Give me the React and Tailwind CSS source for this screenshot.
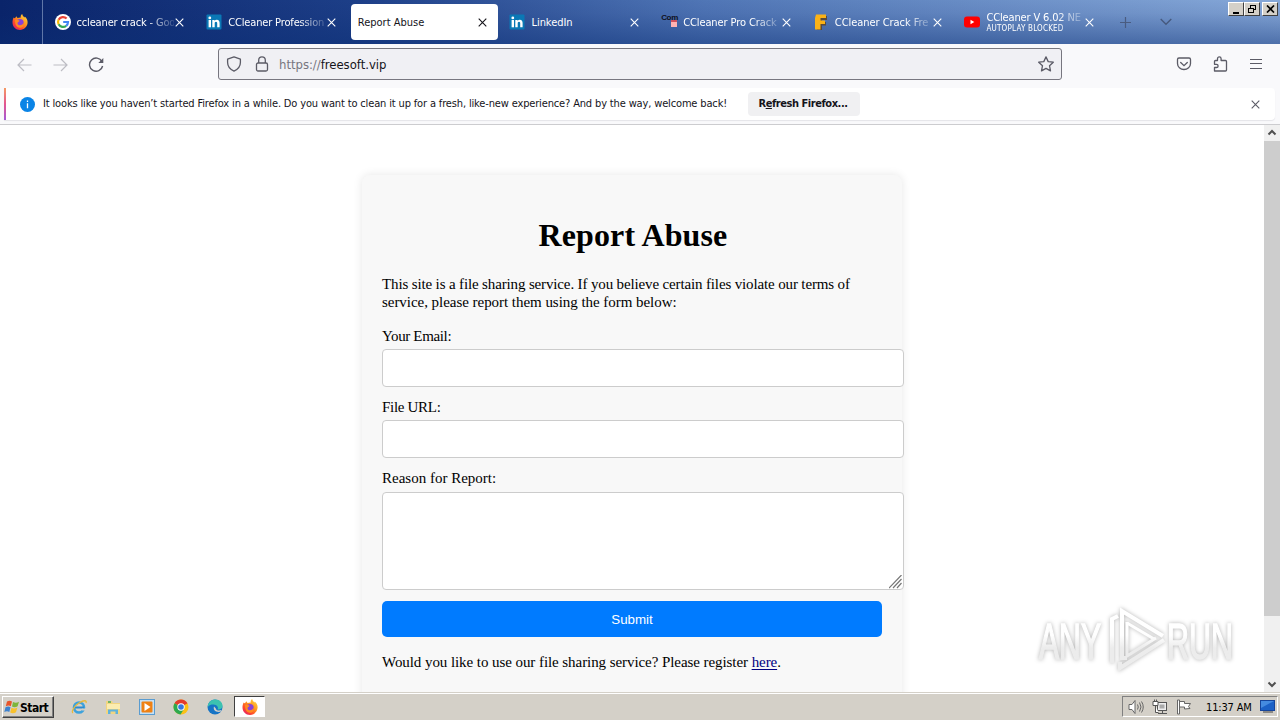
const ui = "font-['DejaVu_Sans_Condensed','DejaVu_Sans',sans-serif]";

function Firefox({ size = 16 }) {
  return (
    <svg width={size} height={size} viewBox="0 0 16 16" className="shrink-0">
      <defs>
        <linearGradient id="fx" x1="1" y1="0" x2="0.2" y2="1">
          <stop offset="0" stopColor="#ffe14a" />
          <stop offset=".45" stopColor="#ff9a1f" />
          <stop offset=".75" stopColor="#ff4a2b" />
          <stop offset="1" stopColor="#e3206b" />
        </linearGradient>
      </defs>
      <path d="M1.7 3.5 C2 4 2.4 4.2 3 4.3 C3.5 3.2 4 2.7 4.7 2.2 C4.7 3 5 3.6 5.6 4 C7 3.6 8 3.3 8.9 3.6 C8.3 2.3 8.8 .9 10.2 0 C10.4 1.6 11.4 2.4 12.6 3.5 C12.8 3.1 12.8 2.8 12.7 2.4 C14.7 4 15.8 6.2 15.6 8.8 C15.3 12.8 12 15.9 8 15.9 C3.8 15.9 .5 12.6 .5 8.4 C.5 6.4 .9 4.7 1.7 3.5Z" fill="url(#fx)" />
      <circle cx="8" cy="8.8" r="3.7" fill="#8a41d8" />
      <path d="M3 6.2 C4.2 5.3 6 5.8 7.6 6.7 C7.4 7.5 6.3 7.7 5.7 8.4 C5.2 9.6 5.9 11 7.6 11.2 C9.5 11.4 11 10.2 11.4 8.4 C12.6 11 11 13.6 8 13.7 C5 13.7 3 11 3 6.2Z" fill="#ff8a20" />
    </svg>
  );
}

function Google() {
  return (
    <svg width="16" height="16" viewBox="0 0 16 16" className="shrink-0">
      <circle cx="8" cy="8" r="8" fill="#fff" />
      <g fill="none" strokeWidth="2.2">
        <path d="M11.6 4.6 A5 5 0 0 0 3.6 5.7" stroke="#ea4335" />
        <path d="M3.6 5.7 A5 5 0 0 0 3.6 10.3" stroke="#fbbc05" />
        <path d="M3.6 10.3 A5 5 0 0 0 11.2 11.8" stroke="#34a853" />
        <path d="M11.2 11.8 A5 5 0 0 0 13 8 H8.2" stroke="#4285f4" />
      </g>
    </svg>
  );
}

function LinkedIn() {
  return (
    <svg width="16" height="16" viewBox="0 0 16 16" className="shrink-0">
      <rect x="0.5" y="0.5" width="15" height="15" rx="1" fill="#0a78b5" />
      <g fill="#fff">
        <circle cx="3.8" cy="3.9" r="1.4" />
        <rect x="2.6" y="6" width="2.4" height="7.300" />
        <path d="M6.300 6h2.300v1c.5-.8 1.200-1.200 2.200-1.200 2 0 2.800 1.300 2.800 3.200v4.300h-2.400V9.500c0-1-.2-1.800-1.200-1.800s-1.300.8-1.300 1.800v3.800H6.300z" />
      </g>
    </svg>
  );
}

function ComIcon() {
  return (
    <div className="relative h-4 w-4 shrink-0">
      <span className="absolute left-0 top-0 font-['Liberation_Sans',sans-serif] text-[8px] font-bold leading-[8px] tracking-[-0.3px] text-[#101020]">Com</span>
      <span className="absolute left-[10px] top-[8px] h-[5px] w-[6px] bg-[#ffb3b3]" />
      <span className="absolute left-[10px] top-[6px] h-[2px] w-[6px] bg-[#d0505c]" />
    </div>
  );
}

function FIcon() {
  return (
    <svg width="16" height="16" viewBox="0 0 16 16" className="shrink-0">
      <path d="M4 2h10v4H9v2h4v3.500H9V16H4z" fill="#5a4a3a" />
      <path d="M3 .5h10v3.500H7.500v2.500H12V10H7.500v5.500H2V4z" fill="#fbb216" />
    </svg>
  );
}

function YouTube() {
  return (
    <svg width="16" height="16" viewBox="0 0 16 16" className="shrink-0">
      <rect x="0" y="2.500" width="16" height="11" rx="3" fill="#f00" />
      <path d="M6.500 5.800v4.400L10.300 8z" fill="#fff" />
    </svg>
  );
}

function Cross({ color = "#fff", s = 9 }) {
  return (
    <svg width={s} height={s} viewBox="0 0 9 9" className="shrink-0">
      <path d="M.7.700l7.600 7.600M8.300.700L.7 8.300" stroke={color} strokeWidth="1.100" fill="none" />
    </svg>
  );
}

const tabs = [
  { icon: <Google />, text: "ccleaner crack - Goo", track: "tracking-[-0.15px]", fade: true },
  { icon: <LinkedIn />, text: "CCleaner Profession", track: "tracking-[-0.15px]", fade: true },
  { text: "Report Abuse", active: true, track: "tracking-[0px]" },
  { icon: <LinkedIn />, text: "LinkedIn", track: "tracking-[-0.05px]" },
  { icon: <ComIcon />, text: "CCleaner Pro Crack", track: "tracking-[-0.1px]", fade: true },
  { icon: <FIcon />, text: "CCleaner Crack Fre", track: "tracking-[-0.05px]", fade: true },
  { icon: <YouTube />, text: "CCleaner V 6.02 NE", sub: "AUTOPLAY BLOCKED", track: "tracking-[-0.15px]", fade: true },
];

function Tab({ tab }) {
  return (
    <div className="flex w-[151.67px] shrink-0 px-[2px] py-1">
      <div className={`flex w-full items-center rounded pl-[7px] pr-[11px] ${tab.active ? "bg-white text-[#15141a]" : "text-white"}`}>
        {tab.icon}
        <div className={`min-w-0 flex-1 overflow-hidden whitespace-nowrap ${tab.icon ? "ml-[6px] mr-[1px]" : ""} ${tab.fade ? "[mask-image:linear-gradient(to_right,#000_72%,rgba(0,0,0,0.15))]" : ""}`}>
          <div className={`text-[11px] ${tab.track} ${tab.sub ? "leading-[12px]" : "pt-[2px] leading-[14px]"}`}>{tab.text}</div>
          {tab.sub && <div className="text-[8px] leading-[9px] tracking-[0.2px]">{tab.sub}</div>}
        </div>
        <Cross color={tab.active ? "#15141a" : "#fff"} />
      </div>
    </div>
  );
}

function WinButton({ children }) {
  return (
    <div className="flex h-[14px] w-4 items-center justify-center border border-b-[#404040] border-l-white border-r-[#404040] border-t-white bg-[#d4d0c8]">
      {children}
    </div>
  );
}

function TitleBar() {
  return (
    <div className="flex h-11 shrink-0 bg-[linear-gradient(to_bottom,transparent_0%,rgba(10,36,106,0.08)_30%,rgba(10,45,115,0.45)_100%),linear-gradient(to_right,#0a246a,#1d3f88_28%,#5076b6_55%,#86a8d8_100%)]">
      <div className="flex w-[43px] shrink-0 items-center border-r border-[#6077a8] pl-3">
        <Firefox />
      </div>
      <div className="ml-[2.500px] flex">
        {tabs.map((t, i) => <Tab key={i} tab={t} />)}
      </div>
      <div className="ml-[13px] flex items-center gap-[29px]">
        <svg width="11" height="11" viewBox="0 0 11 11"><path d="M5.500 0v11M0 5.500h11" stroke="#4a5c80" strokeWidth="1.200" /></svg>
        <svg width="12" height="8" viewBox="0 0 12 8"><path d="M.7 1l5.300 5.300L11.300 1" stroke="#46597d" strokeWidth="1.300" fill="none" /></svg>
      </div>
      <div className="ml-auto mr-[2px] flex pt-[2px]">
        <WinButton><span className="mt-[7px] block h-[2px] w-[6px] bg-black" /></WinButton>
        <WinButton>
          <svg width="10" height="10" viewBox="0 0 10 10" shapeRendering="crispEdges"><path d="M3.500 4V1.500h5v4H7M3 1.500h6M1.500 4.500h5v4h-5zM1 4.500h6" stroke="#000" fill="none" /></svg>
        </WinButton>
        <div className="ml-[2px]"><WinButton><svg width="9" height="8" viewBox="0 0 9 8"><path d="M1 .5l7 7M8 .5l-7 7" stroke="#000" strokeWidth="1.700" /></svg></WinButton></div>
      </div>
    </div>
  );
}

function Toolbar() {
  return (
    <div className="flex h-11 shrink-0 items-start bg-[#f9f9fb] pt-1">
      <div className="flex h-8 w-[218px] items-center pl-[17px] pt-[2px]">
        <svg width="88" height="16" viewBox="0 0 88 16" fill="none" strokeWidth="1.200">
          <path d="M14.500 8H1M7 2L1 8l6 6M36.500 8H50M44 2l6 6-6 6" stroke="#bdbdc4" />
          <path d="M85 4.600A6.600 6.600 0 1 0 85.600 9" stroke="#5b5b66" strokeWidth="1.400" />
          <path d="M86.300 1v5h-5z" fill="#5b5b66" />
        </svg>
      </div>
      <div className="flex h-8 w-[844px] items-center rounded-[3px] border border-[#77767f] bg-[#f0f0f4] pl-[7px] pr-[7px]">
        <svg width="16" height="16" viewBox="0 0 16 16" fill="none" stroke="#5b5b66" strokeWidth="1.300"><path d="M8 .9l6.400 2.300v3.400c0 4-2.400 6.800-6.400 8.500C4 13.400 1.600 10.600 1.600 6.600V3.200z" strokeLinejoin="round" /></svg>
        <svg width="16" height="16" viewBox="0 0 16 16" fill="none" stroke="#5b5b66" strokeWidth="1.300" className="ml-3"><rect x="2.500" y="7" width="11" height="8" rx="1.500" /><path d="M4.700 7V4.200a3.300 3.300 0 0 1 6.600 0V7" /></svg>
        <div className="ml-[9px] flex-1 pt-px text-[13px] tracking-[-0.03px] text-[#77767f]">https://<span className="text-[#15141a]">freesoft.vip</span></div>
        <svg width="16" height="16" viewBox="0 0 16 16" fill="none" stroke="#5b5b66" strokeWidth="1.300" strokeLinejoin="round"><path d="M8 .9l2.200 4.700 5.100.6-3.800 3.500 1 5.200L8 12.400l-4.500 2.500 1-5.200L.7 6.200l5.100-.6z" /></svg>
      </div>
      <div className="flex h-8 items-center pl-[114px]">
        <svg width="16" height="16" viewBox="0 0 16 16" fill="none" stroke="#5b5b66" strokeWidth="1.300"><path d="M3 2h10a1.500 1.500 0 0 1 1.500 1.500V7.500a6.500 6 0 0 1-13 0V3.500A1.500 1.500 0 0 1 3 2z" /><path d="M4.700 6.500L8 9.700l3.300-3.200" strokeLinecap="round" /></svg>
        <svg width="16" height="16" viewBox="0 0 16 16" fill="none" stroke="#5b5b66" strokeWidth="1.300" className="ml-5"><path d="M5.500 4.500V2.700a1.800 1.800 0 0 1 3.600 0v1.800h4.400a1 1 0 0 1 1 1V14a1 1 0 0 1-1 1H2.500V11.500h2a1.600 1.600 0 0 0 0-3.200h-2V5.500a1 1 0 0 1 1-1z" strokeLinejoin="round" /></svg>
        <svg width="12" height="12" viewBox="0 0 12 12" className="ml-[22px]" shapeRendering="crispEdges"><path d="M0 1.500h12M0 5.500h12M0 10.500h12" stroke="#5b5b66" strokeWidth="1" /></svg>
      </div>
    </div>
  );
}

function InfoBar() {
  return (
    <div className="h-[37px] shrink-0 border-b border-[#cccccf] bg-[#f9f9fb] pl-1 pr-[5px]">
      <div className="flex h-8 items-center rounded-r bg-white pr-[15px] text-[#15141a] shadow-[0_1px_1px_#e4e4e8]">
        <span className="h-8 w-[2px] bg-[linear-gradient(#f59a63,#e3558f,#a45ad6)]" />
        <svg width="15" height="15" viewBox="0 0 15 15" className="ml-[14px]"><circle cx="7.500" cy="7.500" r="7.500" fill="#0a84e6" /><path d="M7.500 6.200v5M7.500 3.500v1.500" stroke="#fff" strokeWidth="1.300" /></svg>
        <span className="ml-2 w-[705px] whitespace-nowrap text-[11px] tracking-[-0.148px]">It looks like you haven’t started Firefox in a while. Do you want to clean it up for a fresh, like-new experience? And by the way, welcome back!</span>
        <span className="flex h-6 w-28 items-center justify-center whitespace-pre rounded bg-[#f0f0f2] pr-[2px] pt-px text-[11px] font-bold tracking-[-0.450px]">R<u>e</u>fresh Firefox...</span>
        <span className="ml-auto flex"><Cross color="#5b5b66" /></span>
      </div>
    </div>
  );
}

function Field({ label, track, area }) {
  return (
    <div className="mb-[11px]">
      <div className={`mb-1 h-[18px] leading-[18px] ${track}`}>{label}</div>
      <div className={`w-[522px] rounded border border-[#ccc] bg-white ${area ? "mt-[5px] flex h-[98px] items-end justify-end" : "h-[38px]"}`}>
        {area && <svg width="14" height="14" viewBox="0 0 14 14"><path d="M0 13L12.500 0M4 13l8.500-9M8 13l4.500-5" stroke="#777" strokeWidth="1.200" /></svg>}
      </div>
    </div>
  );
}

function Page() {
  return (
    <div className="flex min-h-0 flex-1 bg-white">
      <div className="flex flex-1 justify-center overflow-hidden pt-[50px]">
        <div className="h-[600px] w-[540px] rounded-[8px] bg-[#f8f8f8] p-5 font-['Liberation_Serif',serif] text-[15px] leading-[18px] text-black shadow-[0_0_10px_rgba(0,0,0,0.1)]">
          <h1 className="mt-[22px] pl-[2px] text-center text-[32px] font-bold leading-[37px] tracking-[0.1px]">Report Abuse</h1>
          <p className="mb-4 mt-[21px] tracking-[-0.04px]"><span className="whitespace-nowrap tracking-[-0.14px]">This site is a file sharing service. If you believe certain files violate our terms of</span><br />service, please report them using the form below:</p>
          <Field label="Your Email:" track="tracking-[-0.35px]" />
          <Field label="File URL:" track="tracking-[-0.3px]" />
          <Field label="Reason for Report:" track="tracking-[0px]" area />
          <div className="flex h-9 items-center justify-center rounded-[5px] bg-[#007bff] pt-px font-['Liberation_Sans',sans-serif] text-[13.33px] text-white">Submit</div>
          <p className="mt-4 tracking-[-0.07px]">Would you like to use our file sharing service? Please register <a className="text-[#000080] underline underline-offset-2">here</a>.</p>
        </div>
      </div>
      <div className="flex w-4 flex-col items-center bg-[#f0f0f0]">
        <svg width="16" height="16" viewBox="0 0 16 16"><path d="M4.500 9.500L8 6l3.500 3.500" stroke="#505050" strokeWidth="2" fill="none" /></svg>
        <div className="h-[475px] w-full bg-[#cdcdcd]" />
        <svg width="16" height="16" viewBox="0 0 16 16" className="mt-auto"><path d="M4.500 6.500L8 10l3.500-3.500" stroke="#505050" strokeWidth="2" fill="none" /></svg>
      </div>
    </div>
  );
}

function Watermark() {
  return (
    <svg className="absolute left-[1030px] top-[604px] drop-shadow-[0_0_2px_rgba(0,0,0,0.3)]" width="210" height="74" viewBox="0 0 210 74">
      <defs>
        <linearGradient id="wm" gradientUnits="userSpaceOnUse" x1="0" y1="8" x2="0" y2="66">
          <stop offset="0.4" stopColor="#fff" />
          <stop offset="0.62" stopColor="#ececec" />
        </linearGradient>
      </defs>
      <g fill="url(#wm)" stroke="url(#wm)" strokeWidth="1.500" fontFamily="Liberation Sans Narrow, Liberation Sans, sans-serif" fontSize="50">
        <text x="9" y="55" textLength="62" lengthAdjust="spacingAndGlyphs">ANY</text>
        <text x="137" y="55" textLength="66" lengthAdjust="spacingAndGlyphs">RUN</text>
      </g>
      <g fill="none" stroke="url(#wm)" strokeWidth="4">
        <path d="M82 59V15l6-3" />
        <path d="M97 54h-5V7l41 25" />
        <path d="M97 18v34l29-18" strokeWidth="3" />
        <path d="M97 19l27 16" strokeWidth="3" />
        <path d="M90 58v6l44-28" />
      </g>
    </svg>
  );
}

function Chrome() {
  return (
    <svg width="16" height="16" viewBox="0 0 16 16">
      <circle cx="8" cy="8" r="7.500" fill="#fbc116" />
      <path d="M8 8L1.500 4.200A7.500 7.500 0 0 1 14.500 4.300z" fill="#e33b2e" />
      <path d="M8 8L1.500 4.200A7.500 7.500 0 0 0 7.500 15.500L11 10z" fill="#2da94f" />
      <circle cx="8" cy="8" r="3.700" fill="#fff" /><circle cx="8" cy="8" r="2.800" fill="#3678e0" />
    </svg>
  );
}

function Taskbar() {
  return (
    <div className="flex h-[28px] shrink-0 items-center border-t border-[#d4d0c8] bg-[#d4d0c8] pl-[2px] pr-[2px] text-black shadow-[inset_0_1px_0_#fff]">
      <div className="flex h-[22px] w-[52px] items-center border border-b-[#404040] border-l-white border-r-[#404040] border-t-white pl-[1px] shadow-[inset_-1px_-1px_0_#808080]">
        <svg width="16" height="16" viewBox="0 0 16 16" className="shrink-0">
          <path d="M3 2.500C5 1.300 6.500 1.500 8 2.500L6.800 7.200C5.200 6.200 3.800 6.300 1.800 7.200z" fill="#e8552a" />
          <path d="M9 3c2 1.200 4 1 6-.2L13.600 7.300C11.800 8.300 9.800 8.500 8 7.500z" fill="#7db53a" />
          <path d="M1.500 8.300C3.500 7.300 5 7.300 6.500 8.300L5.300 13C3.800 12 2.200 12 .3 13z" fill="#3d82cf" />
          <path d="M7.500 8.800c2 1 4 .8 5.900-.2L12 13.200c-2 1.200-4 1.200-5.800.2z" fill="#f8c12c" />
        </svg>
        <span className="pt-[2px] text-[12px] font-bold leading-[14px] tracking-[-0.5px]">Start</span>
      </div>
      <div className="ml-[17px] flex items-center gap-[18px]">
        <svg width="16" height="16" viewBox="0 0 16 16"><circle cx="8" cy="8.500" r="5" fill="none" stroke="#3da2dc" strokeWidth="2.600" /><path d="M4 8.500h9" stroke="#2c8bd0" strokeWidth="2" /><path d="M11 10.500h4" stroke="#d4d0c8" strokeWidth="2" /><path d="M2 14C0 13 3 7 8 4s8-3 7 0" stroke="#e9b93a" strokeWidth="1.300" fill="none" /></svg>
        <svg width="16" height="16" viewBox="0 0 16 16"><path d="M1 2h6l1 2h7v11H1z" fill="#f1d581" /><path d="M2 5h13v5H2z" fill="#fbecb0" /><path d="M3 15v-4.500h10V15h-2.500v-2.500h-5V15z" fill="#5eb2dd" /><path d="M3 3h3" stroke="#49a85c" strokeWidth="1.500" /></svg>
        <svg width="16" height="16" viewBox="0 0 16 16"><rect x=".5" y=".5" width="15" height="15" fill="#c5e0f5" stroke="#5a9cd0" /><rect x="2.500" y="2.500" width="11" height="11" rx="1" fill="#ef8114" /><path d="M5.500 4v8l6-4z" fill="#fff" /></svg>
        <Chrome />
        <svg width="16" height="16" viewBox="0 0 16 16"><circle cx="8" cy="8" r="7.500" fill="#1674c5" /><path d="M.8 6.500C2 2 5.500.5 8.500.5c4 0 7 3 7 6.300 0 3-2.500 4.200-5 3.700C12 8.500 9.800 5.600 6.500 5.600 4 5.600 2 6 .8 8z" fill="#3cc2b0" /><path d="M7 7.500c-1 3 1 6 6.500 5.300l1-1.800C12 12 9 11.500 8.700 9.200z" fill="#d4d0c8" /></svg>
      </div>
      <div className="ml-[11px] flex h-[21px] w-[31px] items-center justify-center border border-b-white border-l-[#404040] border-r-white border-t-[#404040] bg-white"><Firefox /></div>
      <div className="ml-auto flex h-[21px] w-[156px] items-center border border-b-white border-l-[#808080] border-r-white border-t-[#808080] pl-[5px]">
        <svg width="16" height="16" viewBox="0 0 16 16" stroke="#666" fill="none"><path d="M1 5.500h3l3-4v13l-3-4H1z" fill="#fff" /><path d="M9.500 5.500q1.500 2.500 0 5M11.500 3.500q3 4.500 0 9M13.500 2.500q3.500 5.500 0 11" /></svg>
        <svg width="16" height="16" viewBox="0 0 16 16" stroke="#555" fill="none" className="ml-2"><rect x="5.500" y="3.500" width="9" height="8" fill="#eee" /><rect x="7.500" y="5.500" width="5" height="4" fill="#aaa" stroke="none" /><path d="M6 14.500h9M10.500 12v2" /><path d="M1 2.500h5v4H1zM3.500 6.500v7h3M2.500.5v2M4.500.5v2" fill="#fff" /></svg>
        <svg width="16" height="16" viewBox="0 0 16 16" stroke="#666" fill="#fff" className="ml-2"><path d="M1.500 1h2v14h-2zM3.500 2.500h5v2h6l-2 3 1.500 2-5.500.5v-2H3.500z" /></svg>
        <span className="ml-[14px] whitespace-nowrap pt-[2px] text-[11px] leading-[14px] tracking-[-0.15px]">11:37 AM</span>
        <svg width="16" height="13" viewBox="0 0 16 13" className="ml-auto mr-px"><rect x=".5" y=".5" width="14" height="10" fill="#1c61c6" stroke="#16459b" /><path d="M1 1h13L1 8z" fill="#458be0" /><path d="M3 12h10" stroke="#444" /></svg>
      </div>
    </div>
  );
}

export default function App() {
  return (
    <div className={`relative flex h-[720px] w-[1280px] flex-col overflow-hidden ${ui}`}>
      <TitleBar />
      <Toolbar />
      <InfoBar />
      <Page />
      <Taskbar />
      <Watermark />
    </div>
  );
}
